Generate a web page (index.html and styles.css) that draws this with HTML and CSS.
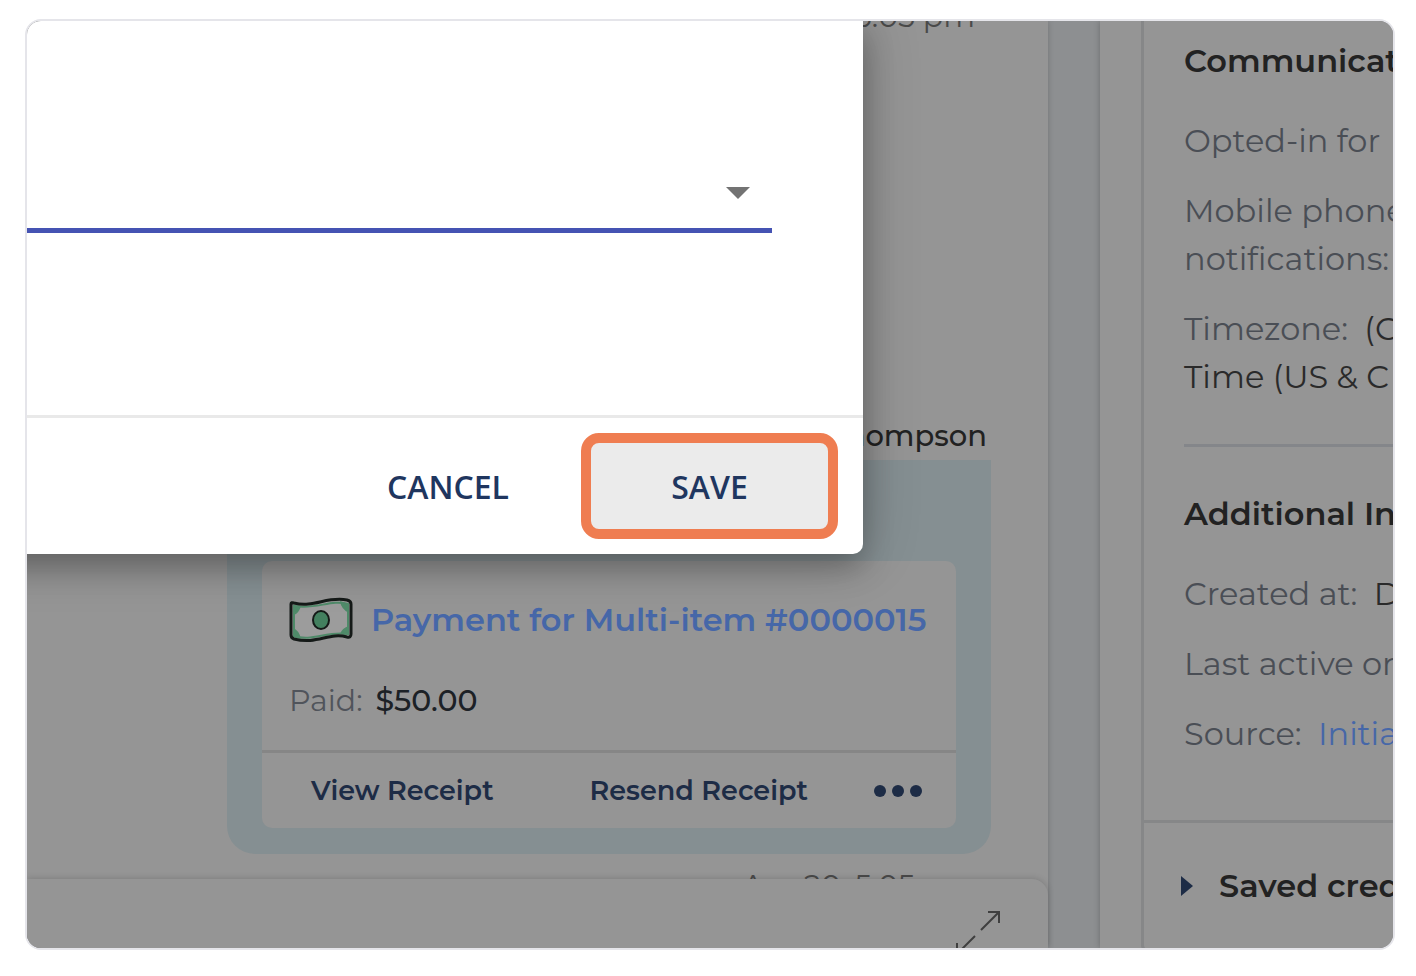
FILE: index.html
```html
<!DOCTYPE html>
<html lang="en">
<head>
<meta charset="utf-8">
<meta name="viewport" content="width=device-width, initial-scale=1">
<title>Contact conversation</title>
<link rel="stylesheet" href="styles.css">
</head>
<body>
<div class="frame">
  <main class="conversation">
    <div class="messages">
      <p class="time">Apr 20, 5:05 pm</p>
      <article class="message">
        <p class="sender">Thompson</p>
        <div class="bubble">
          <section class="card">
            <div class="card-body">
              <div class="card-title">
                <svg class="bill" viewBox="0 0 64 46" aria-hidden="true">
                  <path class="paper" d="M2 7Q2 5 5 6C25 11 38-1 58 3Q62 4 62 7V37Q62 41 58 40C40 35 28 48 5 42Q2 41 2 38Z"/>
                  <path class="corner" d="M4 8l8 1q-2 7-7 9zM51 4l9 3v9q-8-4-9-12zM4 31q6 2 8 11l-8-2zM60 29v9l-9-1q2-6 9-8z"/>
                  <path class="edge" d="M5 9V39C23 45 37 34 59 37V7C42 2 27 13 5 9Z"/>
                  <path class="outline" d="M2 7Q2 5 5 6C25 11 38-1 58 3Q62 4 62 7V37Q62 41 58 40C40 35 28 48 5 42Q2 41 2 38Z"/>
                  <ellipse class="coin" cx="32" cy="23" rx="8" ry="9"/>
                </svg>
                <a class="title-link" href="#payment">Payment for Multi-item #0000015</a>
              </div>
              <p class="paid"><span>Paid:</span> <strong>$50.00</strong></p>
            </div>
            <div class="card-actions">
              <button type="button">View Receipt</button>
              <button type="button">Resend Receipt</button>
              <button type="button" class="more" aria-label="More actions"><svg class="dots" viewBox="0 0 48 12" aria-hidden="true"><circle cx="6" cy="6" r="6"/><circle cx="24" cy="6" r="6"/><circle cx="42" cy="6" r="6"/></svg></button>
            </div>
          </section>
        </div>
      </article>
      <p class="time">Apr 20, 5:05 pm</p>
    </div>
    <div class="composer">
      <button type="button" aria-label="Expand">
        <svg class="expand" viewBox="0 0 44 44" aria-hidden="true"><path d="M25 19L43 1M32 1H43V12M19 25L1 43M1 32V43H12"/></svg>
      </button>
    </div>
  </main>
  <aside class="panel">
    <div class="details">
      <section class="section">
        <h2>Communication</h2>
        <p>Opted-in for</p>
        <p>Mobile phone<br>notifications:</p>
        <p>Timezone: <span class="value">(C<br>Time (US &amp; C</span></p>
        <hr>
        <h2>Additional Info</h2>
        <p>Created at: <span class="value">D</span></p>
        <p>Last active on</p>
        <p>Source: <a class="value" href="#source">Initial</a></p>
      </section>
      <button type="button" class="saved">
        <svg class="caret" viewBox="0 0 12 20" aria-hidden="true"><path d="M0 0L12 10L0 20Z"/></svg>
        <span>Saved credit</span>
      </button>
    </div>
  </aside>
  <div class="dialog" role="dialog" aria-label="Edit">
    <div class="dialog-body">
      <div class="field">
        <select aria-label="Choose an option"><option></option></select>
        <svg class="arrow" viewBox="0 0 24 12" aria-hidden="true"><path d="M0 0H24L12 12Z"/></svg>
      </div>
    </div>
    <div class="dialog-actions">
      <button type="button" class="cancel">CANCEL</button>
      <button type="button" class="save">SAVE</button>
    </div>
  </div>
</div>
</body>
</html>
```
FILE: styles.css
```css
* { box-sizing: border-box; }
body {
  margin: 0;
  height: 100vh;
  padding: 19px 21px 26px 25px;
  display: flex;
  background: #fff;
  font-family: Montserrat, Inter, sans-serif;
  font-size: 32px;
  color: #222;
}
h2, p { margin: 0; }
a { text-decoration: none; color: #4667a8; }
button {
  border: 0;
  padding: 0;
  background: none;
  font: inherit;
  color: inherit;
  white-space: nowrap;
}
svg { display: block; }
.frame {
  position: relative;
  flex: 1;
  min-width: 0;
  display: flex;
  overflow: hidden;
  border: 2px solid #e5e5ea;
  border-radius: 16px;
  background: #8d8f91;
}

/* Conversation */
.conversation {
  flex: 1;
  min-width: 0;
  display: flex;
  flex-direction: column;
  background: #959595;
  box-shadow: 0 0 6px rgba(0, 0, 0, .2);
}
.messages {
  flex: 1;
  min-height: 0;
  overflow: hidden;
  display: flex;
  flex-direction: column;
  align-items: flex-end;
  padding-right: 57px;
}
.messages > * { flex: none; }
.time {
  padding-right: 16px;
  font-size: 30px;
  line-height: 40px;
  color: #4a4a4a;
}
.time:first-child { margin: -24px 0 379px; }
.message { width: 764px; margin-bottom: 12px; }
.sender {
  padding-right: 4px;
  margin-bottom: 4px;
  text-align: right;
  font-size: 29px;
  font-weight: 500;
  line-height: 40px;
}
.bubble {
  padding: 101px 35px 26px;
  border-radius: 0 0 28px 28px;
  background: #858f92;
}
.card { border-radius: 10px; background: #959595; }
.card-body { padding: 34px 27px 29px; }
.card-title { display: flex; align-items: center; gap: 18px; height: 50px; }
.bill { width: 64px; height: 46px; flex: none; }
.paper { fill: #9c9c9c; }
.corner { fill: #4f8a69; }
.edge { fill: none; stroke: #4f8a69; stroke-width: 2; }
.outline { fill: none; stroke: #151a18; stroke-width: 3; }
.coin { fill: #43805f; stroke: #151a18; stroke-width: 2; }
.title-link { font-size: 32px; font-weight: 600; line-height: 48px; white-space: nowrap; }
.paid { margin-top: 36px; font-size: 30px; line-height: 40px; color: #50545b; }
.paid strong { margin-left: 5px; font-weight: 500; color: #1c2126; }
.card-actions {
  display: flex;
  align-items: center;
  padding: 0 34px 0 49px;
  height: 78px;
  border-top: 3px solid #868686;
  color: #1d2c46;
  font-size: 27px;
  font-weight: 600;
}
.card-actions button + button { margin-left: 96px; }
.card-actions .more { margin-left: auto; }
.dots { width: 48px; fill: #1d2c46; }
.composer {
  height: 69px;
  flex: none;
  display: flex;
  justify-content: flex-end;
  align-items: flex-start;
  padding: 32px 48px 0 0;
  border-radius: 0 16px 0 0;
  background: #959595;
  box-shadow: 0 -1px 6px rgba(0, 0, 0, .15);
}
.expand { width: 44px; fill: none; stroke: #3f3f3f; stroke-width: 2; overflow: visible; }

/* Contact details */
.panel {
  width: 293px;
  flex: none;
  margin-left: 52px;
  padding-left: 41px;
  background: #959595;
  box-shadow: 0 0 6px rgba(0, 0, 0, .25);
}
.details {
  border-left: 3px solid #868788;
  border-bottom: 3px solid #868788;
  border-radius: 0 0 0 8px;
  line-height: 48px;
  white-space: nowrap;
  overflow: hidden;
}
.section { padding: 16px 0 62px 40px; border-bottom: 3px solid #868788; color: #4a4e55; }
.section h2 { margin-bottom: 32px; font-size: 32px; font-weight: 600; color: #222; }
.section p + p { margin-top: 22px; }
.section span.value { color: #2a2a2a; }
.section p > .value { margin-left: 8px; }
.section hr { margin: 43px 0; border: 0; border-top: 3px solid #84868a; }
.saved { display: flex; align-items: center; gap: 26px; padding: 39px 0 40px 37px; font-size: 32px; font-weight: 600; line-height: 48px; }
.caret { width: 12px; flex: none; fill: #1d2c46; }

/* Dialog */
.dialog {
  position: absolute;
  top: 0;
  left: -100px;
  width: 936px;
  border-radius: 0 0 10px 0;
  background: #fff;
  box-shadow: 0 14px 30px rgba(0, 0, 0, .25), 0 0 60px rgba(0, 0, 0, .2);
}
.dialog-body { padding: 132px 91px 182px 0; }
.field { display: grid; align-items: center; }
.field > * { grid-area: 1 / 1; }
.field select {
  width: 100%;
  height: 80px;
  border: 0;
  border-bottom: 5px solid #4553b3;
  border-radius: 0;
  outline: 0;
  appearance: none;
  background: none;
  font: inherit;
}
.arrow { width: 24px; margin-right: 22px; justify-self: end; fill: #737373; pointer-events: none; }
.dialog-actions {
  display: flex;
  justify-content: flex-end;
  align-items: center;
  gap: 48px;
  padding: 15px 25px 15px 0;
  border-top: 3px solid #e9e9e9;
  font-family: "Open Sans", "Noto Sans", sans-serif;
  font-size: 32px;
  font-weight: 600;
  color: #1f365f;
}
.cancel { padding: 16px 24px; }
.save {
  width: 257px;
  height: 106px;
  border: 10px solid #ef7d51;
  border-radius: 18px;
  background: #ebebeb;
}
```
